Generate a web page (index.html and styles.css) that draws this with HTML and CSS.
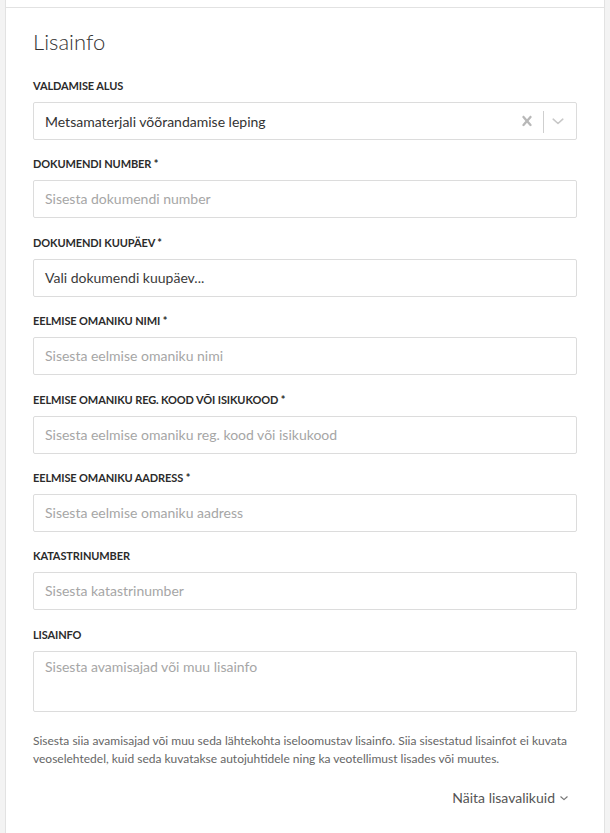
FILE: index.html
```html
<!DOCTYPE html>
<html lang="et">
<head>
<meta charset="utf-8">
<title>Lisainfo</title>
<link rel="stylesheet" href="styles.css">
</head>
<body>
<div class="panel">
  <div class="prev-card"></div>
  <section class="card">
    <h2 class="title">Lisainfo</h2>

    <div class="field">
      <label class="label">Valdamise alus</label>
      <div class="select">
        <span class="select-value">Metsamaterjali võõrandamise leping</span>
        <span class="indicators">
          <span class="clear">
            <svg width="20" height="20" viewBox="0 0 20 20"><path fill="#b8b8b8" d="M14.348 14.849c-0.469 0.469-1.229 0.469-1.697 0l-2.651-3.03-2.651 3.029c-0.469 0.469-1.229 0.469-1.697 0-0.469-0.469-0.469-1.229 0-1.697l2.758-3.15-2.759-3.152c-0.469-0.469-0.469-1.228 0-1.697s1.228-0.469 1.697 0l2.652 3.031 2.651-3.031c0.469-0.469 1.228-0.469 1.697 0s0.469 1.229 0 1.697l-2.758 3.152 2.758 3.15c0.469 0.469 0.469 1.229 0 1.698z"/></svg>
          </span>
          <span class="sep"></span>
          <span class="drop">
            <svg width="20" height="20" viewBox="0 0 20 20"><path fill="none" stroke="#c8c8c8" stroke-width="1.6" stroke-linecap="round" stroke-linejoin="round" d="M5.2 8.2l4.8 4.3 4.8-4.3"/></svg>
          </span>
        </span>
      </div>
    </div>

    <div class="field">
      <label class="label">Dokumendi number *</label>
      <div class="input placeholder">Sisesta dokumendi number</div>
    </div>

    <div class="field">
      <label class="label">Dokumendi kuupäev *</label>
      <div class="input value">Vali dokumendi kuupäev...</div>
    </div>

    <div class="field">
      <label class="label">Eelmise omaniku nimi *</label>
      <div class="input placeholder">Sisesta eelmise omaniku nimi</div>
    </div>

    <div class="field">
      <label class="label">Eelmise omaniku reg. kood või isikukood *</label>
      <div class="input placeholder">Sisesta eelmise omaniku reg. kood või isikukood</div>
    </div>

    <div class="field">
      <label class="label">Eelmise omaniku aadress *</label>
      <div class="input placeholder">Sisesta eelmise omaniku aadress</div>
    </div>

    <div class="field">
      <label class="label">Katastrinumber</label>
      <div class="input placeholder">Sisesta katastrinumber</div>
    </div>

    <div class="field field-last">
      <label class="label">Lisainfo</label>
      <div class="textarea placeholder">Sisesta avamisajad või muu lisainfo</div>
    </div>

    <p class="help">Sisesta siia avamisajad või muu seda lähtekohta iseloomustav lisainfo. Siia sisestatud lisainfot ei kuvata veoselehtedel, kuid seda kuvatakse autojuhtidele ning ka veotellimust lisades või muutes.</p>

    <div class="more-row">
      <span class="more">Näita lisavalikuid
        <svg width="10" height="10" viewBox="0 0 10 10"><path fill="none" stroke="#777" stroke-width="1.2" stroke-linecap="round" stroke-linejoin="round" d="M1.8 3.8l3.2 2.8 3.2-2.8"/></svg>
      </span>
    </div>
  </section>
</div>
</body>
</html>
```

FILE: styles.css
```css
html, body {
  margin: 0;
  padding: 0;
}
body {
  background: #f3f3f3;
  font-family: Lato, "Open Sans", "Liberation Sans", sans-serif;
  color: #333;
  height: 833px;
  overflow: hidden;
}
.panel {
  margin-left: 5px;
  width: 598px;
  min-height: 833px;
  background: #fff;
  border-left: 1px solid #e2e2e2;
  border-right: 1px solid #e2e2e2;
}
.prev-card {
  height: 7px;
  border-bottom: 1px solid #e2e2e2;
}
.card {
  padding: 19px 27px 30px 27px;
}
.title {
  margin: 0 0 21px 0;
  font-size: 22px;
  line-height: 30px;
  font-weight: 300;
  color: #333;
}
.field {
  margin-bottom: 16.4px;
}
.field-last {
  margin-bottom: 20px;
}
.label {
  display: block;
  font-size: 11px;
  line-height: 16px;
  font-weight: 700;
  letter-spacing: -0.12px;
  text-transform: uppercase;
  color: #2b2b2b;
  margin-bottom: 8px;
}
.input, .select, .textarea {
  box-sizing: border-box;
  width: 100%;
  border: 1px solid #dcdcdc;
  border-radius: 2px;
  font-size: 14px;
  padding: 0 11px;
}
.input {
  height: 38px;
  line-height: 36px;
}
.textarea {
  height: 61px;
  padding-top: 5px;
  line-height: 20px;
}
.placeholder {
  color: #a6a6a6;
}
.value {
  color: #3a3a3a;
}
.select {
  height: 38px;
  display: flex;
  align-items: center;
  padding-right: 0;
}
.select-value {
  flex: 1;
  color: #333;
}
.indicators {
  display: flex;
  align-items: center;
  align-self: stretch;
}
.clear {
  display: flex;
  padding: 0 6px;
}
.sep {
  width: 1px;
  align-self: stretch;
  margin: 8px 0 6px 0;
  background: #cfcfcf;
}
.drop {
  display: flex;
  padding: 0 8px 0 4px;
}
.help {
  margin: 0;
  font-size: 12px;
  line-height: 18px;
  color: #666;
}
.more-row {
  display: flex;
  justify-content: flex-end;
  margin-top: 21px;
  padding-right: 8px;
}
.more {
  display: flex;
  align-items: center;
  gap: 4px;
  font-size: 14px;
  line-height: 18px;
  color: #555;
}
```
